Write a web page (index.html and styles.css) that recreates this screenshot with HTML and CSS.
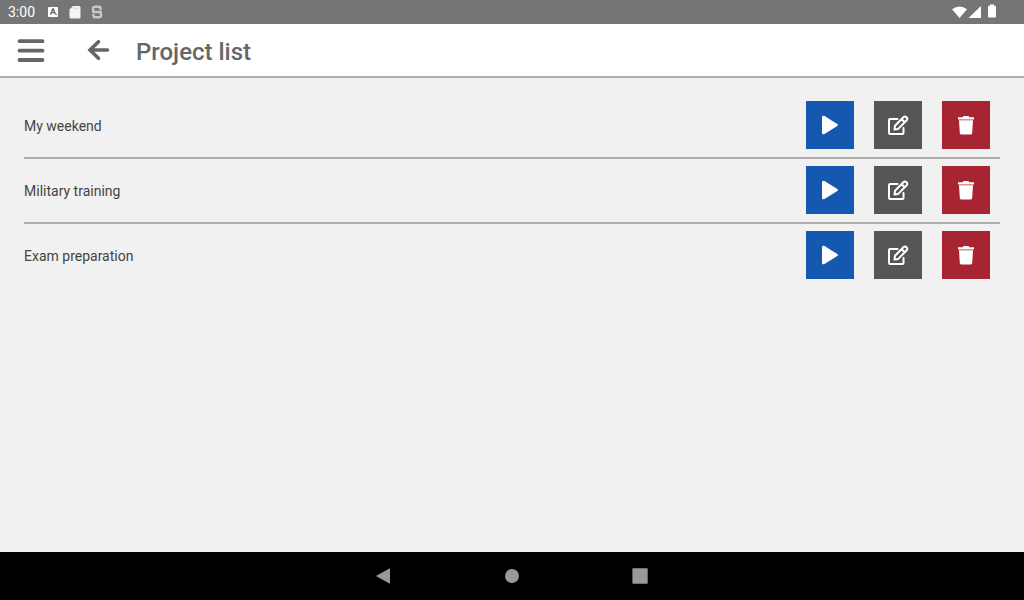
FILE: index.html
```
<!DOCTYPE html>
<html lang="en">
<head>
<meta charset="utf-8">
<meta name="viewport" content="width=device-width, initial-scale=1">
<title>Project list</title>
<link rel="stylesheet" href="styles.css">
</head>
<body>
<svg class="sprite" aria-hidden="true">
  <symbol id="play" viewBox="0 0 24 24"><path d="M4 4.300C4 2.900 5.300 2.300 6.500 3L19.300 10.900Q20.700 12 19.300 13.100L6.500 21C5.300 21.700 4 21.100 4 19.700Z"/></symbol>
  <symbol id="edit" viewBox="0 0 24 24"><g fill="none" stroke="currentColor" stroke-width="2" stroke-linejoin="round" stroke-linecap="round"><path d="M11.500 6H4Q3 6 3 7V20Q3 21 4 21H16.500Q17.500 21 17.500 20V15"/><path d="M8.500 16.500L9 12.800L17.400 4.200Q18.900 2.800 20.500 4.200Q22 5.800 20.700 7.300L12.200 15.900ZM15.700 6.200L18.700 9.200"/></g></symbol>
  <symbol id="trash" viewBox="0 0 24 24"><path d="M4 4.200H8.600L9.500 3H14.500L15.400 4.200H20V6.500H4ZM5 7.300H19L18.200 20Q18 21.500 16.500 21.500H7.500Q6 21.500 5.800 20Z"/></symbol>
</svg>
<div class="screen">
  <div class="status">
    <span class="clock">3:00</span>
    <div class="notices">
      <svg class="small" viewBox="0 0 14 16"><path fill="#fff" d="M3 3H11Q12 3 12 4V12Q12 13 11 13H3Q2 13 2 12V4Q2 3 3 3Z"/><path d="M4.500 10.500L6.700 5H7.300L9.500 10.500M5.500 8.700H8.500" fill="none" stroke="#666" stroke-width="1.300"/><path d="M10 10H11V11H10Z" fill="#777"/></svg>
      <svg class="small" viewBox="0 0 14 16"><path fill="#f4f4f4" d="M5 2H11Q12.500 2 12.500 3.500V13Q12.500 14.500 11 14.500H3Q1.500 14.500 1.500 13V5.500Z"/><path d="M5.500 3.500V5M7.500 3.500V5M9.500 3.500V5" stroke="#ccc"/></svg>
      <svg class="small" viewBox="0 0 14 16"><path d="M10.500 6V4.500Q10.500 2.700 9 2.700H5Q3 2.700 3 4.500V6Q3 8 5 8H9Q11 8 11 10V11.500Q11 13.300 9 13.300H5Q3.500 13.300 3.500 11.500V10M2 8H12" fill="none" stroke="#c8c8c8" stroke-width="2.400"/></svg>
    </div>
    <svg class="signals" viewBox="0 0 46 16"><g fill="#fff"><path d="M2 5.300Q9.500 -0.500 17 5.300L9.500 14.100Z"/><path d="M31 2V14H18.500Z"/><path d="M40 0.500H44V1.700H45Q46 1.700 46 2.700V12.500Q46 13.500 45 13.500H39Q38 13.500 38 12.500V2.700Q38 1.700 39 1.700H40Z"/></g></svg>
  </div>
  <header class="bar">
    <button class="tool" aria-label="Menu"><svg class="menu-icon" viewBox="0 0 28 26"><path d="M2.500 4.200H25.500M2.500 13.700H25.500M2.500 23H25.500" stroke="currentColor" stroke-width="3.800" stroke-linecap="round"/></svg></button>
    <button class="tool" aria-label="Back"><svg class="back-icon" viewBox="0 0 24 24"><path d="M12.500 3.700L4 12L12.500 20.300M4.500 12H21.500" fill="none" stroke="currentColor" stroke-width="3.600" stroke-linecap="round"/></svg></button>
    <h1 class="title">Project list</h1>
  </header>
  <main class="content">
    <ul class="projects">
      <li class="project"><span class="name">My weekend</span><button class="action play" aria-label="Play My weekend"><svg><use href="#play"/></svg></button><button class="action edit" aria-label="Edit My weekend"><svg><use href="#edit"/></svg></button><button class="action delete" aria-label="Delete My weekend"><svg><use href="#trash"/></svg></button></li>
      <li class="project"><span class="name">Military training</span><button class="action play" aria-label="Play Military training"><svg><use href="#play"/></svg></button><button class="action edit" aria-label="Edit Military training"><svg><use href="#edit"/></svg></button><button class="action delete" aria-label="Delete Military training"><svg><use href="#trash"/></svg></button></li>
      <li class="project"><span class="name">Exam preparation</span><button class="action play" aria-label="Play Exam preparation"><svg><use href="#play"/></svg></button><button class="action edit" aria-label="Edit Exam preparation"><svg><use href="#edit"/></svg></button><button class="action delete" aria-label="Delete Exam preparation"><svg><use href="#trash"/></svg></button></li>
    </ul>
  </main>
  <nav class="system" aria-label="System">
    <button class="key" aria-label="Back"><svg viewBox="0 0 24 24"><path d="M3.800 12L17.500 4.500Q18 4.200 18 5V19Q18 19.800 17.500 19.500Z"/></svg></button>
    <button class="key" aria-label="Home"><svg viewBox="0 0 24 24"><circle cx="12" cy="12" r="7"/></svg></button>
    <button class="key" aria-label="Recent apps"><svg viewBox="0 0 24 24"><rect x="4.400" y="4.300" width="15.300" height="15.400" rx="1"/></svg></button>
  </nav>
</div>
</body>
</html>
```
FILE: styles.css
```
* { box-sizing: border-box; }
body {
  margin: 0;
  background: #f1f1f1;
  color: #444;
  font-family: Roboto, "Liberation Sans", sans-serif;
}
button {
  border: 0;
  padding: 0;
  background: none;
  color: inherit;
  cursor: pointer;
}
svg { display: block; }
.sprite { display: none; }
.screen {
  display: flex;
  flex-direction: column;
  min-height: 100vh;
}
.status {
  display: flex;
  align-items: center;
  height: 24px;
  padding: 0 28px 0 8px;
  background: #757575;
  color: #fff;
}
.clock {
  font-size: 14px;
  line-height: 24px;
}
.notices {
  display: flex;
  gap: 8px;
  margin-left: 11px;
}
.small {
  width: 14px;
  height: 16px;
}
.signals {
  width: 46px;
  height: 16px;
  margin-left: auto;
}
.bar {
  display: flex;
  align-items: center;
  padding: 0 8px;
  border-bottom: 2px solid #adadad;
  background: #fff;
  color: #666;
}
.tool {
  display: grid;
  place-items: center;
  width: 46px;
  height: 52px;
}
.tool + .tool { margin-left: 21px; }
.menu-icon {
  width: 28px;
  height: 26px;
}
.back-icon {
  width: 24px;
  height: 24px;
}
.title {
  margin: 0 0 0 15px;
  padding-top: 4px;
  font-size: 24px;
  font-weight: 500;
  line-height: 28px;
}
.content {
  flex: 1;
  padding: 16px 24px;
}
.projects {
  margin: 0;
  padding: 0;
  list-style: none;
}
.project {
  display: flex;
  align-items: center;
  gap: 20px;
  padding: 7px 10px 8px 0;
  border-bottom: 2px solid #adadad;
}
.project:last-child { border-bottom: 0; }
.name {
  flex: 1;
  padding-top: 2px;
  font-size: 14px;
  line-height: 20px;
}
.action {
  display: grid;
  place-items: center;
  width: 48px;
  height: 48px;
  color: #fff;
}
.action svg {
  width: 24px;
  height: 24px;
  fill: currentColor;
}
.play { background: #1558b0; }
.edit { background: #555; }
.delete { background: #a82432; }
.system {
  display: flex;
  justify-content: center;
  gap: 80px;
  background: #000;
  color: #999;
}
.key {
  display: grid;
  place-items: center;
  width: 48px;
  height: 48px;
}
.key svg {
  width: 24px;
  height: 24px;
  fill: currentColor;
}
```
